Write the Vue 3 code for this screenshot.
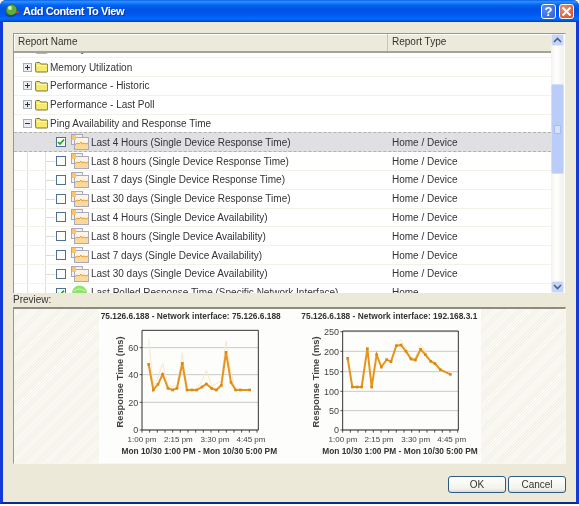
<template>
  <div class="window">
    <div class="titlebar">
      <svg class="app-icon" width="16" height="16" viewBox="0 0 16 16">
        <circle cx="7.5" cy="7" r="5.5" fill="#5fae3c" stroke="#2c6e2a" />
        <circle cx="6" cy="5" r="2" fill="#cdeeb0" />
        <path d="M2 12q5 3 10-1" fill="none" stroke="#1f3f7a" stroke-width="1.4" />
        <path d="M12 9l3 0" stroke="#d8402a" stroke-width="1.6" />
      </svg>
      <span class="title">Add Content To View</span>
      <div class="caption-btn help">?</div>
      <div class="caption-btn close">
        <svg width="11" height="11" viewBox="0 0 11 11">
          <path d="M1.5 1.5l8 8M9.5 1.5l-8 8" stroke="#fff" stroke-width="2" />
        </svg>
      </div>
    </div>

    <div class="body">
      <div class="list">
        <div class="table">
          <div class="header">
            <div class="col-name">Report Name</div>
            <div class="col-type">Report Type</div>
          </div>
          <div class="rows">
            <div class="rows-inner">
              <div
                v-for="row in rows"
                :key="row.id"
                class="row"
                :class="{ selected: row.selected }"
              >
                <div class="cell-name">
                  <template v-if="row.folder">
                    <span class="expander">
                      <i class="dash"></i>
                      <i v-if="!row.open" class="bar"></i>
                    </span>
                    <svg class="folder" width="13" height="12" viewBox="0 0 13 12">
                      <path d="M.5 2.500q0-1 1-1h3l1.200 1.500h6q1 0 1 1v6q0 1-1 1h-10q-1 0-1-1z" fill="#f6ea6c" stroke="#77733f" />
                      <path d="M1.500 4.500h10" stroke="#fcf8b8" />
                    </svg>
                  </template>
                  <template v-else>
                    <span class="guide"></span>
                    <span class="guide branch"></span>
                    <span class="checkbox" :class="{ checked: row.checked }">
                      <svg v-if="row.checked" width="8" height="8" viewBox="0 0 8 8">
                        <path d="M1 4l2 2 4-4.500" fill="none" stroke="#21a121" stroke-width="1.700" />
                      </svg>
                    </span>
                    <svg v-if="row.live" class="report" width="18" height="16" viewBox="0 0 18 16">
                      <circle cx="8.500" cy="8" r="7.500" fill="#8fe36a" />
                      <path d="M3 6q5-4 11 0" stroke="#d4f7c0" fill="none" />
                    </svg>
                    <svg v-else class="report" width="18" height="16" viewBox="0 0 18 16">
                      <rect x=".5" y=".5" width="11" height="10" fill="#f3f1f6" stroke="#a9a9bc" />
                      <rect x="3.500" y="3.500" width="14" height="12" fill="#fbd99a" stroke="#a9a9bc" />
                      <path d="M4 4h13v5H4z" fill="#fdf4e6" />
                      <path d="M4 11l2-2 2 1 2-2 1 2 2-1 2 1 2-1" fill="none" stroke="#e6a03a" />
                      <rect x="1" y="1" width="4" height="5" fill="#fbc766" />
                    </svg>
                  </template>
                  <span class="label">{{ row.name }}</span>
                </div>
                <div class="cell-type">{{ row.type }}</div>
              </div>
            </div>
          </div>
        </div>
        <div class="scrollbar">
          <div class="sb-btn">
            <svg width="9" height="6" viewBox="0 0 9 6"><path d="M1 5l3.500-3.500L8 5" fill="none" stroke="#4d6185" stroke-width="1.600" /></svg>
          </div>
          <div class="sb-track">
            <div class="sb-thumb"><i class="sb-grip"></i></div>
          </div>
          <div class="sb-btn">
            <svg width="9" height="6" viewBox="0 0 9 6"><path d="M1 1l3.500 3.500L8 1" fill="none" stroke="#4d6185" stroke-width="1.600" /></svg>
          </div>
        </div>
      </div>

      <div class="preview-label">Preview:</div>
      <div class="preview">
        <div class="charts">
          <svg
            v-for="chart in charts"
            :key="chart.id"
            class="chart"
            width="191"
            height="154"
            :viewBox="chart.viewBox"
          >
            <text class="chart-title" :x="chart.titleX" y="40" :textLength="chart.titleW">{{ chart.title }}</text>
            <line
              v-for="t in chart.ticks"
              :key="t.label"
              class="grid"
              :x1="chart.left"
              x2="502"
              :y1="t.y"
              :y2="t.y"
            />
            <path class="frame" :d="chart.frame" />
            <g v-for="t in chart.ticks" :key="'l' + t.label">
              <line class="axis" :x1="chart.left - 7" :x2="chart.left" :y1="t.y" :y2="t.y" />
              <text class="tick" :x="chart.left - 11" :y="t.y + 10" text-anchor="end">{{ t.label }}</text>
            </g>
            <line
              v-for="x in chart.xticks"
              :key="x"
              class="axis"
              :x1="x"
              :x2="x"
              y1="372"
              y2="380"
            />
            <text
              v-for="l in chart.xlabels"
              :key="l.text"
              class="xtick"
              :x="l.x"
              y="408"
              text-anchor="middle"
            >{{ l.text }}</text>
            <text class="axis-title" :transform="chart.ytitle" text-anchor="middle">Response Time (ms)</text>
            <text class="chart-range" :x="chart.rangeX" y="445" text-anchor="middle">Mon 10/30 1:00 PM - Mon 10/30 5:00 PM</text>
            <polyline class="peak" :points="toPoints(chart.peak)" />
            <polyline class="series" :points="toPoints(chart.data)" />
            <rect
              v-for="(p, i) in chart.data"
              :key="i"
              class="dot"
              :x="p[0] - 4"
              :y="p[1] - 4"
              width="8"
              height="8"
            />
          </svg>
        </div>
      </div>

      <div class="footer">
        <button class="btn">OK</button>
        <button class="btn">Cancel</button>
      </div>
    </div>
  </div>
</template>

<script setup>
const child = (id, name, extra = {}) => ({ id, name, type: "Home / Device", ...extra });
const folder = (id, name, open = false) => ({ id, name, type: "", folder: true, open });

const rows = [
  folder(1, "Memory"),
  folder(2, "Memory Utilization"),
  folder(3, "Performance - Historic"),
  folder(4, "Performance - Last Poll"),
  folder(5, "Ping Availability and Response Time", true),
  child(6, "Last 4 Hours (Single Device Response Time)", { selected: true, checked: true }),
  child(7, "Last 8 hours (Single Device Response Time)"),
  child(8, "Last 7 days (Single Device Response Time)"),
  child(9, "Last 30 days (Single Device Response Time)"),
  child(10, "Last 4 Hours (Single Device Availability)"),
  child(11, "Last 8 hours (Single Device Availability)"),
  child(12, "Last 7 days (Single Device Availability)"),
  child(13, "Last 30 days (Single Device Availability)"),
  child(14, "Last Polled Response Time (Specific Network Interface)", { checked: true, live: true, type: "Home" }),
];

const ticksFrom = (start) => Array.from({ length: 16 }, (_, i) => start + i * 23);

// coordinates are in 3x units of the 200x160 chart cell
const charts = [
  {
    id: 1,
    viewBox: "24 9 573 462",
    title: "75.126.6.188 - Network interface: 75.126.6.188",
    titleX: 29,
    titleW: 540,
    left: 153,
    frame: "M153 73H502V372H153Z",
    ytitle: "translate(95 228) rotate(-90)",
    rangeX: 325,
    ticks: [
      { label: "0", y: 372 },
      { label: "20", y: 289 },
      { label: "40", y: 206 },
      { label: "60", y: 125 },
    ],
    xticks: ticksFrom(153),
    xlabels: [
      { text: "1:00 pm", x: 153 },
      { text: "2:15 pm", x: 262 },
      { text: "3:30 pm", x: 372 },
      { text: "4:45 pm", x: 480 },
    ],
    data: [
      [173, 175], [187, 252], [201, 235], [215, 205], [231, 247], [245, 252], [258, 247],
      [274, 172], [288, 252], [303, 252], [317, 252], [333, 243], [346, 234], [362, 247],
      [376, 252], [391, 238], [405, 139], [420, 229], [434, 252], [448, 252], [476, 252],
    ],
    peak: [
      [173, 100], [187, 245], [201, 215], [215, 172], [231, 240], [258, 240], [274, 140],
      [288, 250], [317, 250], [333, 225], [346, 193], [362, 240], [391, 225], [405, 105],
      [420, 200], [434, 250], [476, 250],
    ],
  },
  {
    id: 2,
    viewBox: "-3 9 573 462",
    title: "75.126.6.188 - Network interface: 192.168.3.1",
    titleX: 31,
    titleW: 528,
    left: 155,
    frame: "M155 75H502V372H155Z",
    ytitle: "translate(85 228) rotate(-90)",
    rangeX: 327,
    ticks: [
      { label: "0", y: 372 },
      { label: "50", y: 314 },
      { label: "100", y: 256 },
      { label: "150", y: 197 },
      { label: "200", y: 136 },
      { label: "250", y: 77 },
    ],
    xticks: ticksFrom(155),
    xlabels: [
      { text: "1:00 pm", x: 156 },
      { text: "2:15 pm", x: 264 },
      { text: "3:30 pm", x: 374 },
      { text: "4:45 pm", x: 482 },
    ],
    data: [
      [170, 157], [184, 243], [198, 243], [212, 243], [229, 128], [242, 243], [257, 146],
      [271, 183], [287, 161], [300, 167], [316, 119], [330, 117], [345, 136], [360, 159],
      [373, 162], [389, 130], [403, 146], [419, 166], [432, 173], [448, 191], [478, 205],
    ],
    peak: [
      [316, 112], [330, 102], [345, 128], [360, 155], [373, 155], [389, 115], [403, 138],
      [419, 160], [432, 168],
    ],
  },
];

function toPoints(list) {
  return list.map((p) => p.join(",")).join(" ");
}
</script>

<style scoped>
.window {
  width: 579px;
  height: 504px;
  box-sizing: border-box;
  display: flex;
  flex-direction: column;
  background: #ece9d8;
  border-left: 3px solid #1339d8;
  border-right: 3px solid #1339d8;
  border-bottom: 2px solid #0a2a8c;
  border-radius: 6px 6px 0 0;
  font-family: "Liberation Sans", Arial, sans-serif;
  font-size: 10px;
  color: #333;
  filter: blur(0.3px);
}

.titlebar {
  height: 22px;
  margin: 0 -3px;
  padding: 0 5px 0 4px;
  display: flex;
  align-items: center;
  flex-shrink: 0;
  border-radius: 6px 6px 0 0;
  background: linear-gradient(#0a5ee8 0, #3593ff 8%, #127dff 14%, #0262ee 24%, #0054e3 40%, #0055eb 60%, #005bf5 72%, #026afe 82%, #0062ef 90%, #0040ab 100%);
}

.app-icon {
  margin-right: 3px;
}

.title {
  flex: 1;
  color: #fff;
  font-weight: bold;
  font-size: 11px;
  letter-spacing: -0.45px;
  text-shadow: 1px 1px 0 #0a3a9c;
}

.caption-btn {
  width: 15px;
  height: 15px;
  display: flex;
  align-items: center;
  justify-content: center;
  border: 1px solid #fff;
  border-radius: 3px;
  box-sizing: border-box;
  color: #fff;
  font-weight: bold;
  font-size: 13px;
}

.help {
  background: radial-gradient(circle at 30% 30%, #5b8cf0, #2a5ee0);
  margin-right: 3px;
}

.close {
  background: radial-gradient(circle at 30% 30%, #ee8f6a, #d8491f);
}

.body {
  flex: 1;
  display: flex;
  flex-direction: column;
  padding: 11px 10px 0;
  min-height: 0;
}

.list {
  height: 260px;
  display: flex;
  background: #fff;
  border: 1px solid #9a9888;
  border-right-color: #ece9d8;
  border-bottom: none;
  box-sizing: border-box;
  flex-shrink: 0;
}

.table {
  flex: 1;
  min-width: 0;
  display: flex;
  flex-direction: column;
}

.header {
  height: 17px;
  display: flex;
  flex-shrink: 0;
  background: #ebeadb;
  border-bottom: 2px solid #a5a397;
  line-height: 15px;
  box-shadow: inset 1px 1px 0 #fff;
}

.col-name {
  width: 374px;
  padding-left: 4px;
  box-sizing: border-box;
  border-right: 1px solid #c7c5b2;
}

.col-type {
  padding-left: 4px;
}

.rows {
  flex: 1;
  overflow: hidden;
}

.rows-inner {
  margin-top: -13.6px;
}

.row {
  height: 18.8px;
  display: flex;
  align-items: center;
  box-sizing: border-box;
  border-bottom: 1px solid #f4f2e8;
}

.row.selected {
  background: #e0dfe3;
  border-top: 1px dashed #b5b3a8;
  border-bottom: 1px dashed #b5b3a8;
  height: 19.8px;
  margin-top: -1px;
}

.cell-name {
  width: 374px;
  height: 100%;
  display: flex;
  align-items: center;
  padding-left: 9px;
  box-sizing: border-box;
}

.cell-type {
  padding-left: 4px;
}

.expander {
  width: 9px;
  height: 9px;
  position: relative;
  box-sizing: border-box;
  border: 1px solid #a9adb4;
  background: #e9ecf0;
  margin-right: 3px;
  flex-shrink: 0;
}

.dash {
  position: absolute;
  left: 1px;
  top: 3px;
  width: 5px;
  height: 1px;
  background: #333;
}

.bar {
  position: absolute;
  left: 3px;
  top: 1px;
  width: 1px;
  height: 5px;
  background: #333;
}

.folder {
  margin-right: 2px;
  flex-shrink: 0;
}

.guide {
  width: 18px;
  height: 100%;
  box-sizing: border-box;
  border-left: 1px solid #e4e2d8;
  margin-left: 4px;
  flex-shrink: 0;
}

.guide + .guide {
  margin-left: 0;
  width: 11px;
  position: relative;
}

.branch::after {
  content: "";
  position: absolute;
  left: 0;
  top: 50%;
  width: 9px;
  height: 1px;
  background: #dedcd0;
}

.checkbox {
  width: 10px;
  height: 10px;
  display: flex;
  align-items: center;
  justify-content: center;
  box-sizing: border-box;
  border: 1px solid #4f6f95;
  background: #fbfbf8;
  margin-right: 5px;
  flex-shrink: 0;
}

.report {
  margin-right: 2px;
  flex-shrink: 0;
}

.label {
  white-space: nowrap;
}

.scrollbar {
  width: 13px;
  margin-right: 1px;
  display: flex;
  flex-direction: column;
  flex-shrink: 0;
  background: linear-gradient(90deg, #f3f1ec, #fff 40%, #f3f1ec);
}

.sb-btn {
  height: 12px;
  display: flex;
  align-items: center;
  justify-content: center;
  background: #c6d5f7;
  border: 1px solid #e3ebfb;
  border-radius: 2px;
  box-sizing: border-box;
  flex-shrink: 0;
}

.sb-track {
  flex: 1;
  padding-top: 38px;
}

.sb-thumb {
  height: 90px;
  display: flex;
  align-items: center;
  justify-content: center;
  background: #bacdf8;
  border: 1px solid #d3dffa;
  border-radius: 2px;
  box-sizing: border-box;
}

.sb-grip {
  width: 5px;
  height: 7px;
  background: #d6e1fb;
  border: 1px solid #a9bdec;
}

.preview-label {
  height: 14px;
  line-height: 14px;
  flex-shrink: 0;
}

.preview {
  height: 157px;
  flex-shrink: 0;
  box-sizing: border-box;
  border: 1px solid #9a9888;
  border-top: 2px solid #8d8b7e;
  border-right-color: #f8f7ef;
  border-bottom-color: #f8f7ef;
  background: repeating-linear-gradient(135deg, #fbfaf5 0 1px, #f4f2e8 1px 2px);
  display: flex;
  justify-content: center;
}

.charts {
  display: flex;
  height: 154px;
  background: #fdfdfc;
}

.chart {
  display: block;
  font-family: "Liberation Sans", Arial, sans-serif;
}

.chart-title,
.chart-range {
  font-size: 25px;
  font-weight: bold;
  fill: #333;
}

.axis-title {
  font-size: 28px;
  font-weight: bold;
  fill: #444;
}

.tick {
  font-size: 27px;
  fill: #444;
}

.xtick {
  font-size: 24px;
  fill: #444;
}

.grid {
  stroke: #c9c9c5;
  stroke-width: 3;
}

.frame {
  fill: none;
  stroke: #333;
  stroke-width: 3;
}

.axis {
  stroke: #333;
  stroke-width: 2.5;
}

.peak {
  fill: none;
  stroke: #f9e8c8;
  stroke-width: 3;
}

.series {
  fill: none;
  stroke: #e5951c;
  stroke-width: 6;
}

.dot {
  fill: #d98a14;
}

.footer {
  display: flex;
  justify-content: flex-end;
  gap: 2px;
  padding-top: 12px;
}

.btn {
  width: 58px;
  height: 17px;
  padding: 0;
  font: inherit;
  color: #333;
  background: linear-gradient(#fff, #f3f2ea 80%, #dcd8c8);
  border: 1px solid #2f5a85;
  border-radius: 3px;
}
</style>

<style>
html,
body {
  background: #fff;
}
</style>
